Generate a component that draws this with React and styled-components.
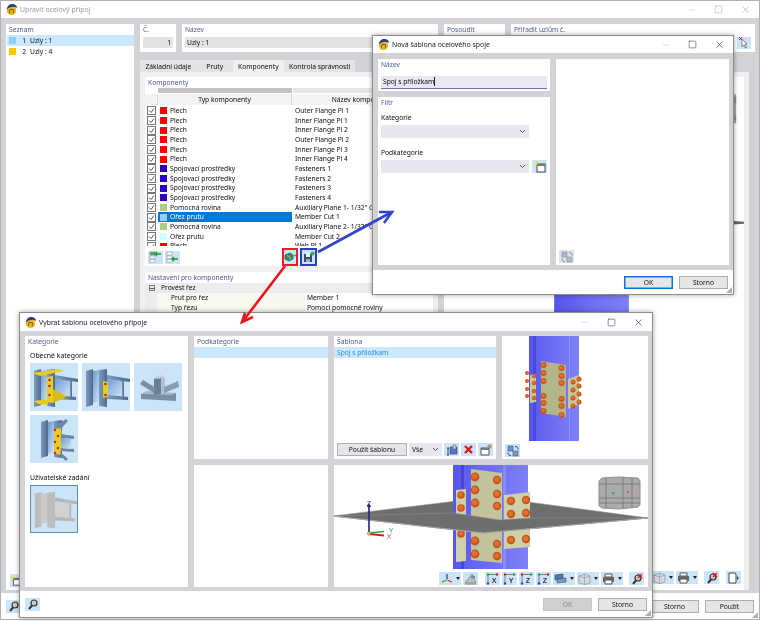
import React from 'react';
import styled, { createGlobalStyle } from 'styled-components';
import { Minus, Square, X } from 'lucide-react';

const Global = createGlobalStyle`
  html, body { margin: 0; padding: 0; background: #fff; }
  * { box-sizing: border-box; }
  body { font-family: "Noto Sans", "Open Sans", sans-serif; font-size: 6.7px; color: #0c0c0c; }
`;

const Desk = styled.div`
  position: relative;
  width: 760px;
  height: 621px;
  overflow: hidden;
  filter: blur(0.3px);
`;

const Win = styled.div`
  position: absolute;
  left: ${(p) => p.$left}px;
  top: ${(p) => p.$top}px;
  width: ${(p) => p.$w}px;
  height: ${(p) => p.$h}px;
  display: flex;
  flex-direction: column;
  background: #fff;
  border: 1px solid ${(p) => (p.$back ? '#b0b0b0' : '#8c8c8c')};
  box-shadow: ${(p) => (p.$back ? 'none' : '0 0 5px rgba(0,0,0,.35)')};
`;

const TitleBar = styled.div`
  height: ${(p) => p.$h || 17}px;
  flex: none;
  display: flex;
  align-items: center;
  gap: 2px;
  padding-left: 4px;
  font-size: 6.9px;
  color: ${(p) => (p.$dim ? '#9b9b9b' : '#222')};
`;

const WinControls = styled.div`
  margin-left: auto;
  display: flex;
  align-items: center;
  color: ${(p) => (p.$dim ? '#a8a8a8' : '#333')};
  svg { display: block; margin-right: 17px; stroke-width: 1.4; }
  svg:first-child { color: #c8c8c8; }
  svg:last-child { margin-right: 8px; }
`;

const WinBody = styled.div`
  flex: 1;
  min-height: 0;
  background: #d2d2d7;
`;

const Footer = styled.div`
  flex: none;
  height: ${(p) => p.$h || 26}px;
  display: flex;
  align-items: center;
  justify-content: flex-end;
  gap: 6px;
  padding: 0 5px;
  position: relative;
`;

const Btn = styled.div`
  width: ${(p) => p.$w || 49}px;
  height: 13px;
  display: flex;
  align-items: center;
  justify-content: center;
  background: ${(p) => (p.$off ? '#cfcfcf' : '#e6e6e6')};
  color: ${(p) => (p.$off ? '#8a8a8a' : '#111')};
  border: 1px solid ${(p) => (p.$primary ? '#0a78d2' : p.$off ? '#c4c4c4' : '#adadad')};
  box-shadow: ${(p) => (p.$primary ? 'inset 0 0 0 0.5px #0a78d2' : 'none')};
`;

const Grip = styled.span`
  position: absolute;
  right: 1px;
  bottom: 1px;
  width: 6px;
  height: 6px;
  background: radial-gradient(circle, #a8a8a8 0.7px, transparent 0.8px) 0 0 / 2px 2px;
  clip-path: polygon(100% 0, 100% 100%, 0 100%);
`;

const Panel = styled.div`
  background: #fff;
  min-width: 0;
  min-height: 0;
  overflow: hidden;
  position: relative;
`;

const PanelTitle = styled.div`
  color: #4c5b8c;
  line-height: 11px;
  height: 11px;
  padding-left: ${(p) => (p.$flush ? 0 : 3)}px;
`;

const IconBtn = styled.div`
  flex: none;
  width: ${(p) => p.$w || 15}px;
  height: ${(p) => p.$h || 13}px;
  display: flex;
  align-items: center;
  justify-content: center;
  gap: 3px;
  background: ${(p) => (p.$off ? '#e2e2e2' : '#cce4f7')};
  border: ${(p) => (p.$ring ? `2.5px solid ${p.$ring}` : 'none')};
`;

const Caret = styled.span`
  width: 0;
  height: 0;
  border-left: 2.5px solid transparent;
  border-right: 2.5px solid transparent;
  border-top: 3px solid #222;
`;

/* main window */
const MainBody = styled(WinBody)`
  display: grid;
  grid-template-columns: 128px 1fr;
  gap: 6px;
  padding: 6px 4px 3px 5px;
`;

const ListPanel = styled(Panel)`
  display: flex;
  flex-direction: column;
`;

const ListItem = styled.div`
  height: 11px;
  margin-left: 1px;
  padding-left: 2px;
  display: flex;
  align-items: center;
  background: ${(p) => (p.$active ? '#cce8ff' : 'transparent')};
`;

const Swatch = styled.i`
  display: block;
  flex: none;
  width: ${(p) => p.$s || 7}px;
  height: ${(p) => p.$s || 7}px;
  background: ${(p) => p.$c};
`;

const ListNo = styled.span`
  width: 10px;
  text-align: right;
  margin-right: 4px;
`;

const ListFoot = styled.div`
  margin-top: auto;
  padding: 0 0 3px 4px;
`;

const MainRight = styled.div`
  display: flex;
  flex-direction: column;
  min-width: 0;
`;

const FieldsRow = styled.div`
  display: grid;
  grid-template-columns: 36px 256px 61px 244px;
  gap: 6px;
  height: 28px;
`;

const FieldPanel = styled(Panel)`
  padding: 0 3px;
`;

const ReadOnly = styled.div`
  height: 11px;
  margin-top: 2px;
  background: #e3e3e3;
  line-height: 11px;
  padding: 0 2px;
  text-align: ${(p) => p.$align || 'left'};
`;

const MainLower = styled.div`
  flex: 1;
  min-height: 0;
  display: grid;
  grid-template-columns: 298px 305px;
  gap: 6px;
  margin-top: 8px;
`;

const Tabs = styled.div`
  display: flex;
  height: 12px;
`;

const Tab = styled.div`
  padding: 0 ${(p) => p.$pad}px;
  line-height: 13px;
  background: ${(p) => (p.$active ? '#f0f0f0' : '#e4e4e6')};
`;

const TabBody = styled.div`
  height: calc(100% - 12px);
  background: #f0f0f0;
  padding: 5px 5px 0;
  display: flex;
  flex-direction: column;
  gap: 6px;
`;

const CompPanel = styled(Panel)`
  flex: none;
  height: 189px;
  display: flex;
  flex-direction: column;
`;

const TableGroup = styled.div`
  height: 5px;
  margin: 0 0 1px 13px;
  display: grid;
  grid-template-columns: 134px 1fr;
  gap: 1px;
  flex: none;
  div { background: #c2c2c2; }
  div + div { background: #e4e4e4; }
`;

const TableRowHead = styled.div`
  flex: none;
  height: 11px;
  display: grid;
  grid-template-columns: 13px 134px 1fr;
  line-height: 11px;
  background: #f3f3f3;
  span { text-align: center; border-right: 1px solid #d8d8d8; }
`;

const Rows = styled.div`
  height: 140px;
  margin-top: 1px;
  overflow: hidden;
  flex: none;
`;

const Row = styled.div`
  height: 9.67px;
  display: grid;
  grid-template-columns: 13px 134px 1fr;
  line-height: 9.6px;
`;

const CheckCell = styled.div`
  display: flex;
  align-items: center;
  justify-content: center;
`;

const TypeCell = styled.div`
  display: flex;
  align-items: center;
  gap: 3px;
  padding-left: 2px;
  background: ${(p) => (p.$sel ? '#0078d4' : 'transparent')};
  color: ${(p) => (p.$sel ? '#fff' : 'inherit')};
`;

const NameCell = styled.div`
  padding-left: 3px;
  white-space: nowrap;
`;

const CompTools = styled.div`
  flex: none;
  display: flex;
  align-items: center;
  padding: 2px 0 0 3px;
  gap: 2px;
`;

const ToolSpacer = styled.span`
  flex: none;
  width: ${(p) => p.$w}px;
`;

const SetPanel = styled(Panel)`
  flex: 1;
`;

const TreeHead = styled.div`
  height: 10px;
  line-height: 10px;
  display: flex;
  align-items: center;
  gap: 6px;
  padding-left: 4px;
  background: #ececec;
`;

const PlusBox = styled.span`
  width: 6px;
  height: 6px;
  border: 1px solid #777;
  position: relative;
  &::after {
    content: '';
    position: absolute;
    left: 0;
    right: 0;
    top: 1.5px;
    height: 1px;
    background: #555;
  }
`;

const TreeRow = styled.div`
  height: 10px;
  line-height: 10px;
  display: grid;
  grid-template-columns: 12px 121px 27px 1fr;
  div:nth-child(1) { background: #ececec; }
  div:nth-child(2) { background: #f8f8ef; padding-left: 14px; }
  div:nth-child(3) { background: #f6f6ee; }
  div:nth-child(4) { padding-left: 2px; white-space: nowrap; }
`;

const GraphPanel = styled(Panel)`
  margin: 12px 5px 0 0;
  display: flex;
  flex-direction: column;
  border-top: 5px solid #f0f0f0;
  overflow: visible;
  box-shadow: 5px 0 0 #efefef;
`;

const GraphCanvas = styled.svg`
  display: block;
  width: 100%;
  flex: none;
`;

const ViewTools = styled.div`
  flex: none;
  display: flex;
  justify-content: flex-end;
  align-items: center;
  gap: 2px;
  padding-right: ${(p) => p.$pr || 0}px;
  margin-top: ${(p) => p.$mt || 0}px;
`;

/* new template dialog */
const NewBody = styled(WinBody)`
  display: grid;
  grid-template-columns: 172px 173px;
  gap: 6px;
  padding: 6px 5px 5px;
`;

const NewLeft = styled.div`
  display: grid;
  grid-template-rows: 32px 1fr;
  gap: 6px;
  min-height: 0;
`;

const NameInput = styled.div`
  margin: 6px 3px 0;
  height: 13px;
  line-height: 12px;
  background: #e8e8f3;
  border-bottom: 1px solid #6f73b8;
  padding-left: 2px;
  span { border-right: 1px solid #222; }
`;

const FieldLabel = styled.div`
  padding: 4px 0 2px 3px;
  line-height: 11px;
  margin-top: ${(p) => p.$mt || 0}px;
`;

const SelectRow = styled.div`
  display: flex;
  gap: 3px;
  padding-left: 3px;
`;

const Select = styled.div`
  flex: none;
  width: ${(p) => p.$w || 148}px;
  height: 13px;
  background: #e6e7f1;
  display: flex;
  align-items: center;
  justify-content: ${(p) => (p.$text ? 'space-between' : 'flex-end')};
  padding: 0 3px;
  svg { display: block; }
`;

const CornerTool = styled.div`
  position: absolute;
  left: 3px;
  bottom: 2px;
`;

/* template picker dialog */
const PickBody = styled(WinBody)`
  display: grid;
  grid-template-columns: 163px 134px 162px 146px;
  grid-template-rows: 123px 122px;
  gap: 6px;
  padding: 5px 5px 4px;
`;

const CatPanel = styled(Panel)`
  grid-row: 1 / span 2;
`;

const ViewPanel = styled(Panel)`
  grid-column: 3 / span 2;
  display: flex;
  flex-direction: column;
`;

const SubHead = styled.div`
  font-size: 6.9px;
  padding: 3px 0 2px 5px;
  line-height: 11px;
  margin-top: ${(p) => p.$mt || 0}px;
`;

const Thumbs = styled.div`
  display: grid;
  grid-template-columns: repeat(3, 48px);
  gap: 4px;
  padding-left: 5px;
`;

const Thumb = styled.div`
  width: 48px;
  height: 48px;
  background: #cce4f7;
  border: ${(p) => (p.$sel ? '1px solid #5a8fc0' : 'none')};
  svg { display: block; width: 100%; height: 100%; }
`;

const SelectedLine = styled.div`
  height: 11px;
  background: #cce8ff;
  line-height: 11px;
  padding-left: 3px;
  color: #2a8fe0;
`;

const TemplatePanel = styled(Panel)`
  display: flex;
  flex-direction: column;
`;

const TemplateTools = styled.div`
  margin-top: auto;
  display: flex;
  align-items: center;
  gap: 2px;
  padding: 0 3px 3px;
`;

const PreviewPanel = styled(Panel)`
  display: flex;
  flex-direction: column;
`;

const PreviewTool = styled.div`
  padding: 3px 0 0 3px;
`;

/* drawings */
const Logo = () => (
  <svg width="13" height="13" viewBox="0 0 14 14">
    <circle cx="7" cy="8" r="5" fill="#e8b820" />
    <path d="M2 7c0-4 3-6 6-6 3 0 5 2 5 4L9 4C6 4 4 5 2 7z" fill="#24407a" />
    <path d="M5 11V7h4v4" fill="none" stroke="#7a5a10" />
  </svg>
);

const Check = () => (
  <svg width="9" height="9" viewBox="0 0 9 9">
    <rect x=".5" y=".5" width="8" height="8" fill="#fff" stroke="#777" />
    <path d="M2 4.5l2 2 3-4" fill="none" stroke="#444" strokeWidth=".9" />
  </svg>
);

const Chevron = () => (
  <svg width="7" height="5" viewBox="0 0 7 5">
    <path d="M1 1l2.5 2.5L6 1" fill="none" stroke="#555" />
  </svg>
);

const Magnifier = ({ cross }) => (
  <svg width="12" height="12" viewBox="0 0 12 12">
    <circle cx="7" cy="5" r="3" fill="#c8c8c8" stroke="#333" strokeWidth="1.2" />
    <path d="M5 7.5L2 11" stroke="#333" strokeWidth="2" />
    {cross && <path d="M7 1l4 4M11 1L7 5" stroke="#e01010" strokeWidth="1.4" />}
  </svg>
);

const NewFolder = () => (
  <svg width="13" height="13" viewBox="0 0 13 13">
    <rect x="4" y="4" width="8" height="8" fill="#fff" stroke="#444" />
    <path d="M4 4h8v2H4z" fill="#777" />
    <path d="M3.5 0l.8 2.2L6.5 3l-2.2.8-.8 2.2-.8-2.2L.5 3l2.2-.8z" fill="#f2dc20" />
  </svg>
);

const ArrowsList = ({ flip }) => (
  <svg width="13" height="12" viewBox="0 0 13 12">
    <rect x="1" y="1" width="5" height="3" fill={flip ? '#fff' : '#5aa85a'} stroke="#888" strokeWidth=".5" />
    <rect x="1" y="5" width="5" height="2.5" fill="#fff" stroke="#888" strokeWidth=".5" />
    <rect x="1" y="8.5" width="5" height="2.5" fill="#fff" stroke="#888" strokeWidth=".5" />
    <path d={flip ? 'M12 8H6M8 6L6 8l2 2' : 'M12 3H6M8 1L6 3l2 2'} stroke="#1a9a3a" fill="none" strokeWidth="1.3" />
  </svg>
);

const ApplyIcon = () => (
  <svg width="12" height="10" viewBox="0 0 12 10">
    <path d="M1 3l5-2 3 2v4L5 9 1 7z" fill="#3a8a5a" stroke="#245" strokeWidth=".6" />
    <path d="M3 3.5l3 1.5v3" fill="none" stroke="#cde" strokeWidth=".6" />
    <path d="M10 3.5h2" stroke="#2a6" strokeWidth="1.3" />
  </svg>
);

const SaveIcon = () => (
  <svg width="12" height="12" viewBox="0 0 12 12">
    <path d="M1 3h8v8H1z" fill="#3a4a70" />
    <path d="M3 3h4v3H3z" fill="#dfe" />
    <path d="M3 8h4v3H3z" fill="#aab" />
    <circle cx="9.5" cy="2.5" r="2" fill="#3aa84a" />
  </svg>
);

const SwapIcon = ({ off }) => (
  <svg width="12" height="12" viewBox="0 0 12 12" opacity={off ? 0.55 : 1}>
    <rect x="1" y="1" width="5" height="5" fill="#6f8fe0" stroke="#345" strokeWidth=".5" />
    <rect x="6" y="6" width="5" height="5" fill="#8a9ab0" stroke="#345" strokeWidth=".5" />
    <path d="M8 1.5c2 0 3 1 3 3M4 10.5c-2 0-3-1-3-3" fill="none" stroke="#2a3a60" />
  </svg>
);

const AxesIcon = () => (
  <svg width="12" height="11" viewBox="0 0 12 11">
    <path d="M6 7V1" stroke="#2a2ab0" strokeWidth="1.2" />
    <path d="M6 7l5 2" stroke="#d02020" strokeWidth="1.2" />
    <path d="M6 7L1 9" stroke="#20a040" strokeWidth="1.2" />
    <circle cx="6" cy="7" r="1" fill="#e8d020" />
  </svg>
);

const ViewSetIcon = () => (
  <svg width="13" height="12" viewBox="0 0 13 12">
    <path d="M1 10h11L8 1z" fill="#b8c8b0" stroke="#667" strokeWidth=".6" />
    <ellipse cx="9" cy="4" rx="2.5" ry="1.5" fill="#8a7ab0" />
    <path d="M1 11h11" stroke="#888" />
  </svg>
);

const AxisViewIcon = ({ label, a, b, c }) => (
  <svg width="14" height="12" viewBox="0 0 14 12">
    <path d="M2 1.5h9" stroke="#666" strokeWidth=".8" />
    <circle cx="2" cy="1.5" r="1.2" fill={a} />
    <circle cx="11" cy="1.5" r="1.2" fill={b} />
    <path d="M2 2v8" stroke="#666" strokeWidth=".8" />
    <circle cx="2" cy="10.5" r="1.2" fill={c} />
    <text x="8" y="10" textAnchor="middle" fontSize="7" fontWeight="700" fill="#333" fontFamily="Liberation Sans">{label}</text>
  </svg>
);

const PlatesIcon = () => (
  <svg width="13" height="11" viewBox="0 0 13 11">
    <path d="M1 2l8-1v4l-8 2z" fill="#4a78b8" stroke="#334" strokeWidth=".5" />
    <path d="M3 6l9-1v4l-9 1z" fill="#7a9ac8" stroke="#334" strokeWidth=".5" />
  </svg>
);

const BoxIcon = () => (
  <svg width="13" height="12" viewBox="0 0 13 12">
    <path d="M1 3l6-2 5 2v7l-5 1.5L1 10z" fill="#d5dbe3" stroke="#8a93a0" strokeWidth=".7" />
    <path d="M6.5 1v10.5M1 3l5.5 2L12 3" fill="none" stroke="#8a93a0" strokeWidth=".6" />
  </svg>
);

const PrintIcon = () => (
  <svg width="13" height="12" viewBox="0 0 13 12">
    <path d="M3 1h7v3H3z" fill="#fff" stroke="#555" />
    <path d="M1 4h11v5H1z" fill="#666" />
    <path d="M3 7h7v4H3z" fill="#fff" stroke="#555" />
  </svg>
);

const PageIcon = () => (
  <svg width="13" height="12" viewBox="0 0 13 12">
    <path d="M2 1h6l1 1v9H2z" fill="#fff" stroke="#444" />
    <path d="M10 4l2 2-2 2z" fill="#444" />
  </svg>
);

const TemplateIcon = () => (
  <svg width="12" height="12" viewBox="0 0 12 12">
    <path d="M4 3h7v7H4z" fill="#5a78d8" stroke="#234" strokeWidth=".5" />
    <path d="M7 1h3v4H7z" fill="#ccc" stroke="#555" strokeWidth=".5" />
    <path d="M1 4h2M2 4v7M1 11h2" stroke="#223" strokeWidth=".8" />
  </svg>
);

const RedX = () => (
  <svg width="11" height="11" viewBox="0 0 11 11">
    <path d="M2 2l7 7M9 2l-7 7" stroke="#e01414" strokeWidth="2.4" />
  </svg>
);

const ExportIcon = () => (
  <svg width="12" height="12" viewBox="0 0 12 12">
    <path d="M1 4h8v7H1z" fill="#fff" stroke="#555" />
    <path d="M1 4h8v2H1z" fill="#777" />
    <path d="M8 1h3v3H8z" fill="#caa86a" stroke="#765" strokeWidth=".5" />
  </svg>
);

const PickCursor = () => (
  <svg width="13" height="12" viewBox="0 0 13 12">
    <path d="M4 2l5 5-2 .3L8.5 10.5l-1 .5L6 8 4 9.5z" fill="#fff" stroke="#555" strokeWidth=".7" />
    <path d="M1 0l3 3M4 0L1 3" stroke="#d01818" strokeWidth=".9" />
  </svg>
);

const Bolt = ({ x, y, r = 3 }) => (
  <g>
    <circle cx={x} cy={y} r={r} fill="#c4561a" />
    <circle cx={x - 0.3} cy={y - 0.4} r={r * 0.62} fill="#e07030" />
  </g>
);

const beamStops = (
  <defs>
    <linearGradient id="steel" x1="0" x2="1" y1="0" y2="0">
      <stop offset="0" stopColor="#7f9bbc" />
      <stop offset="1" stopColor="#4e6a8e" />
    </linearGradient>
    <linearGradient id="web" x1="0" x2="1" y1="0" y2="1">
      <stop offset="0" stopColor="#6c9ad0" />
      <stop offset="1" stopColor="#d4e8f8" />
    </linearGradient>
    <linearGradient id="col" x1="0" x2="1" y1="0" y2="0">
      <stop offset="0" stopColor="#5656f0" />
      <stop offset=".5" stopColor="#6e6ef2" />
      <stop offset="1" stopColor="#8080fa" />
    </linearGradient>
  </defs>
);

const Column = ({ fill = 'url(#steel)', web = 'url(#web)' }) => (
  <g>
    <path d="M4 8l7-2v36l-7 2z" fill={fill} />
    <path d="M11 8l7-1v31l-7 2z" fill={web} />
    <path d="M17 7l8-1v38l-8-1z" fill={fill} />
  </g>
);

const Beam = ({ fill = 'url(#steel)', web = 'url(#web)' }) => (
  <g>
    <path d="M25 16l16 2v16l-16-1z" fill={web} />
    <path d="M25 12l23 4v3l-23-3z" fill={fill} />
    <path d="M25 32l21 2v3l-21-1z" fill={fill} />
    <path d="M40 18l2 0v16l-2 0z" fill={fill} />
  </g>
);

const ThumbA = () => (
  <svg viewBox="0 0 48 48">
    <Column />
    <path d="M2 10l26-4 6 2-24 5z" fill="#e8cc20" />
    <Beam />
    <path d="M17 14l6-1v27l-6-1z" fill="#e8cc20" />
    <path d="M23 26l14 8-14 6z" fill="#d8bc14" />
    <path d="M4 38l14-2v6L8 41z" fill="#e8cc20" />
    <circle cx="19.5" cy="17" r="1.3" fill="#c02040" />
    <circle cx="19.5" cy="23" r="1.3" fill="#c02040" />
    <circle cx="19.5" cy="32" r="1.3" fill="#c02040" />
  </svg>
);

const ThumbB = () => (
  <svg viewBox="0 0 48 48">
    <Column />
    <Beam />
    <path d="M21 18l5 1v15l-5 1z" fill="#e8cc20" />
    <circle cx="23.5" cy="21" r="1.3" fill="#c02040" />
    <circle cx="23.5" cy="32" r="1.3" fill="#c02040" />
  </svg>
);

const ThumbC = () => (
  <svg viewBox="0 0 48 48">
    <path d="M7 31l35-1v8l-35-2z" fill="#7b8ea6" />
    <path d="M7 31l6-3 29 2-5 2z" fill="#a8b6c6" />
    <path d="M20 16l7-2v17l-7 1z" fill="#6a7f98" />
    <path d="M27 14l4 1v14l-4 2z" fill="#b2c0d0" />
    <path d="M20 14l7-2 4 2-7 2z" fill="#c4d0dc" />
    <path d="M6 21l3-4 13 8-2 5z" fill="#7b8ea6" />
    <path d="M30 24l14-6 1 6-15 6z" fill="#8a9cb2" />
  </svg>
);

const ThumbD = () => (
  <svg viewBox="0 0 48 48">
    <g transform="translate(7 -1)">
      <Column />
    </g>
    <path d="M27 10l9-6 2 2-8 9z" fill="#6a86a8" />
    <path d="M29 36l9 8-2 2-9-8z" fill="#6a86a8" />
    <path d="M24 14l7-1 2 14-3 13-6-2z" fill="#e8cc20" />
    <path d="M31 19l13 2v3l-13-1zM31 33l13 1v3l-13-1z" fill="#6a86a8" />
    <path d="M31 23l10 1v10l-10-1z" fill="url(#web)" />
    {[15, 21, 27, 33, 38].map((y, i) => (
      <circle key={y} cx={i % 2 ? 28 : 25} cy={y} r="1.2" fill="#c02040" />
    ))}
  </svg>
);

const ThumbE = () => (
  <svg viewBox="0 0 48 48">
    <Column fill="#bdbdbd" web="#cbcbcb" />
    <Beam fill="#b8b8b8" web="#d2d2d2" />
  </svg>
);

const MainBackGraph = () => (
  <GraphCanvas viewBox="444 77 305 492" height="492">
    <path d="M735 90h6v30h-6z" fill="#a9a9a9" />
    <path d="M735 93h6v6h-6zM735 112h6v5h-6z" fill="#8d8d8d" />
    <path d="M735 219l14 1v2l-14 1z" fill="#666" />
    <path d="M556 223h76v92h-76z" fill="url(#col)" />
  </GraphCanvas>
);

const PreviewGraph = () => (
  <GraphCanvas viewBox="502 336 146 105" height="105">
    <rect x="529" y="336" width="50" height="105" fill="url(#col)" />
    <rect x="533" y="336" width="3" height="105" fill="#3d3dc8" opacity=".6" />
    <rect x="569" y="336" width="1" height="105" fill="#8f8ff8" />
    <path d="M530 375l6-1v28l-6 1z" fill="#c6c69a" />
    {[373, 381, 389, 396].map((y) => (
      <Bolt key={y} x={527} y={y} r={2} />
    ))}
    {[376, 383, 391, 398].map((y) => (
      <Bolt key={y} x={534} y={y} r={2.2} />
    ))}
    <path d="M541 361l25 4v52l-25-4z" fill="#b5b58a" />
    {[365, 373, 381, 396, 403, 411].map((y) => (
      <Bolt key={y} x={543.5} y={y} />
    ))}
    {[368, 376, 383, 399, 406, 415].map((y) => (
      <Bolt key={y} x={561.5} y={y} />
    ))}
    <path d="M568 379l11-4v29l-11 5z" fill="#c6c69a" />
    {[382, 390, 398, 406].map((y) => (
      <Bolt key={y} x={573} y={y} r={2.5} />
    ))}
    {[379, 386, 394, 402].map((y) => (
      <Bolt key={y} x={579} y={y} r={2.5} />
    ))}
  </GraphCanvas>
);

const Connection = () => (
  <g>
    <rect x="453" y="464" width="75" height="105" fill="url(#col)" />
    <rect x="461" y="464" width="3" height="105" fill="#4646d0" />
    <rect x="503" y="464" width="3" height="105" fill="#8c8cf6" />
    <path d="M456 490l10-1v72l-10 1z" fill="#cfcfa8" />
    <path d="M471 469l31 4v90l-31-3z" fill="#c2c29c" />
    {[477, 490, 503, 541, 554].map((y) => (
      <Bolt key={y} x={475} y={y} r={4.4} />
    ))}
    {[480, 494, 506, 544, 556].map((y) => (
      <Bolt key={y} x={497} y={y} r={4.2} />
    ))}
    {[495, 508, 534].map((y) => (
      <Bolt key={y} x={461} y={y} r={3.8} />
    ))}
    <path d="M504 495l26-3v55l-26 2z" fill="#cfcfa8" />
    {[501, 514, 540].map((y) => (
      <Bolt key={y} x={511} y={y} r={4.2} />
    ))}
    {[500, 513, 539].map((y) => (
      <Bolt key={y} x={526} y={y} r={4.2} />
    ))}
  </g>
);

const BigView = () => (
  <GraphCanvas viewBox="334 465 314 105" height="105">
    <path d="M333 516L490 497l158 21-165 15z" fill="#6e6e6e" stroke="#8d8d8d" strokeWidth=".6" />
    <Connection />
    <path d="M333 516l120-3 47 7 30-2 118 0-165 15z" fill="#6e6e6e" stroke="#8d8d8d" strokeWidth=".6" />
    <path d="M333 516l150 17 165-15" fill="none" stroke="#a5a5a5" strokeWidth="1" />
    <path d="M599 481l3-3 17-1 19 1 2 3v24l-2 2-19 2-17-1-3-2z" fill="#ababab" stroke="#8f8f8f" />
    <path d="M606 478v30M623 477v31M632 478v29M599 484h41M599 498h41M599 503h41" stroke="#777" strokeWidth=".9" fill="none" />
    <path d="M611 492l4 0-1 4z" fill="#5aa86a" />
    <circle cx="628" cy="492" r="1.2" fill="#d05a6a" />
    <path d="M369 533v-27" stroke="#20208e" strokeWidth="1.6" />
    <path d="M369 503l-2 4h4z" fill="#20208e" />
    <path d="M369 533l15-1.5" stroke="#20b040" strokeWidth="1.6" />
    <path d="M369 534l15 1.5" stroke="#d02020" strokeWidth="1.8" />
    <circle cx="369" cy="533.5" r="1.8" fill="#e6d020" stroke="#555" strokeWidth=".4" />
    <text x="369" y="506" textAnchor="middle" fontSize="7" fill="#2a2a90" fontFamily="Liberation Sans">Z</text>
    <text x="391" y="533" textAnchor="middle" fontSize="7" fill="#30b050" fontFamily="Liberation Sans">Y</text>
    <text x="389" y="539" textAnchor="middle" fontSize="7" fill="#e05050" fontFamily="Liberation Sans">X</text>
  </GraphCanvas>
);

const Arrows = styled.svg`
  position: absolute;
  left: 0;
  top: 0;
  pointer-events: none;
`;

const components = [
  ['#ff0000', 'Plech', 'Outer Flange Pl 1'],
  ['#ff0000', 'Plech', 'Inner Flange Pl 1'],
  ['#ff0000', 'Plech', 'Inner Flange Pl 2'],
  ['#ff0000', 'Plech', 'Outer Flange Pl 2'],
  ['#ff0000', 'Plech', 'Inner Flange Pl 3'],
  ['#ff0000', 'Plech', 'Inner Flange Pl 4'],
  ['#2a00c8', 'Spojovací prostředky', 'Fasteners 1'],
  ['#2a00c8', 'Spojovací prostředky', 'Fasteners 2'],
  ['#2a00c8', 'Spojovací prostředky', 'Fasteners 3'],
  ['#2a00c8', 'Spojovací prostředky', 'Fasteners 4'],
  ['#a8d080', 'Pomocná rovina', 'Auxiliary Plane 1- 1/32" G'],
  ['#8fd0f5', 'Ořez prutu', 'Member Cut 1', true],
  ['#a8d080', 'Pomocná rovina', 'Auxiliary Plane 2- 1/32" G'],
  ['#ccffff', 'Ořez prutu', 'Member Cut 2'],
  ['#ff0000', 'Plech', 'Web Pl 1'],
];

const WindowControls = ({ dim }) => (
  <WinControls $dim={dim}>
    <Minus size={10} />
    <Square size={9} />
    <X size={11} />
  </WinControls>
);

const ViewToolbar = () => (
  <>
    <IconBtn $w={22}><AxesIcon /><Caret /></IconBtn>
    <IconBtn><ViewSetIcon /></IconBtn>
    <ToolSpacer $w={3} />
    <IconBtn><AxisViewIcon label="X" a="#20a040" b="#d02020" c="#2050d0" /></IconBtn>
    <IconBtn><AxisViewIcon label="Y" a="#d02020" b="#20a040" c="#2050d0" /></IconBtn>
    <IconBtn><AxisViewIcon label="Z" a="#d02020" b="#20a040" c="#2050d0" /></IconBtn>
    <IconBtn><AxisViewIcon label="Z" a="#20a040" b="#d02020" c="#2030b0" /></IconBtn>
    <IconBtn $w={22}><PlatesIcon /><Caret /></IconBtn>
    <IconBtn $w={22}><BoxIcon /><Caret /></IconBtn>
    <IconBtn $w={22}><PrintIcon /><Caret /></IconBtn>
    <ToolSpacer $w={2} />
    <IconBtn><Magnifier cross /></IconBtn>
  </>
);

export default function App() {
  return (
    <Desk>
      <Global />
      <svg width="0" height="0" style={{ position: 'absolute' }}>{beamStops}</svg>

      <Win $left={0} $top={0} $w={760} $h={620} $back>
        <TitleBar $dim>
          <Logo />
          Upravit ocelový přípoj
          <WindowControls dim />
        </TitleBar>
        <MainBody>
          <ListPanel>
            <PanelTitle>Seznam</PanelTitle>
            <ListItem $active>
              <Swatch $c="#89d4f5" />
              <ListNo>1</ListNo> Uzly : 1
            </ListItem>
            <ListItem>
              <Swatch $c="#ffc800" />
              <ListNo>2</ListNo> Uzly : 4
            </ListItem>
            <ListFoot>
              <IconBtn $w={11}><NewFolder /></IconBtn>
            </ListFoot>
          </ListPanel>

          <MainRight>
            <FieldsRow>
              <FieldPanel>
                <PanelTitle $flush>Č.</PanelTitle>
                <ReadOnly $align="right">1</ReadOnly>
              </FieldPanel>
              <FieldPanel>
                <PanelTitle $flush>Název</PanelTitle>
                <ReadOnly>Uzly : 1</ReadOnly>
              </FieldPanel>
              <FieldPanel>
                <PanelTitle $flush>Posoudit</PanelTitle>
              </FieldPanel>
              <FieldPanel>
                <PanelTitle $flush>Přiřadit uzlům č.</PanelTitle>
                <ViewTools $mt={2} $pr={1}>
                  <IconBtn $w={14} $h={12}><PickCursor /></IconBtn>
                </ViewTools>
              </FieldPanel>
            </FieldsRow>

            <MainLower>
              <div>
                <Tabs>
                  <Tab $pad={5.5}>Základní údaje</Tab>
                  <Tab $pad={9.5}>Pruty</Tab>
                  <Tab $pad={5.5} $active>Komponenty</Tab>
                  <Tab $pad={5}>Kontrola správnosti</Tab>
                </Tabs>
                <TabBody>
                  <CompPanel>
                    <PanelTitle>Komponenty</PanelTitle>
                    <TableGroup><div /><div /></TableGroup>
                    <TableRowHead>
                      <span />
                      <span>Typ komponenty</span>
                      <span>Název komponenty</span>
                    </TableRowHead>
                    <Rows>
                      {components.map(([color, type, name, sel]) => (
                        <Row key={name}>
                          <CheckCell><Check /></CheckCell>
                          <TypeCell $sel={sel}>
                            <Swatch $c={color} />
                            {type}
                          </TypeCell>
                          <NameCell>{name}</NameCell>
                        </Row>
                      ))}
                    </Rows>
                    <CompTools>
                      <IconBtn><ArrowsList /></IconBtn>
                      <IconBtn><ArrowsList flip /></IconBtn>
                      <ToolSpacer $w={98} />
                      <IconBtn $w={16} $h={18} $ring="#ee1c25"><ApplyIcon /></IconBtn>
                      <IconBtn $w={17} $h={18} $ring="#2b3fc4"><SaveIcon /></IconBtn>
                    </CompTools>
                  </CompPanel>
                  <SetPanel>
                    <PanelTitle>Nastavení pro komponenty</PanelTitle>
                    <TreeHead><PlusBox /> Provést řez</TreeHead>
                    <TreeRow><div /><div>Prut pro řez</div><div /><div>Member 1</div></TreeRow>
                    <TreeRow><div /><div>Typ řezu</div><div /><div>Pomocí pomocné roviny</div></TreeRow>
                  </SetPanel>
                </TabBody>
              </div>
              <GraphPanel>
                <MainBackGraph />
                <ViewTools $mt={2} $pr={3}>
                  <IconBtn $w={22}><BoxIcon /><Caret /></IconBtn>
                  <IconBtn $w={22}><PrintIcon /><Caret /></IconBtn>
                  <ToolSpacer $w={2} />
                  <IconBtn><Magnifier cross /></IconBtn>
                  <ToolSpacer $w={3} />
                  <IconBtn><PageIcon /></IconBtn>
                </ViewTools>
              </GraphPanel>
            </MainLower>
          </MainRight>
        </MainBody>
        <Footer>
          <IconBtn style={{ marginRight: 'auto' }}><Magnifier /></IconBtn>
          <Btn>Storno</Btn>
          <Btn>Použít</Btn>
          <Grip />
        </Footer>
      </Win>

      <Win $left={372} $top={35} $w={362} $h={260}>
        <TitleBar>
          <Logo />
          Nová šablona ocelového spoje
          <WindowControls />
        </TitleBar>
        <NewBody>
          <NewLeft>
            <Panel>
              <PanelTitle>Název</PanelTitle>
              <NameInput><span>Spoj s příložkam</span></NameInput>
            </Panel>
            <Panel>
              <PanelTitle>Filtr</PanelTitle>
              <FieldLabel>Kategorie</FieldLabel>
              <SelectRow><Select><Chevron /></Select></SelectRow>
              <FieldLabel $mt={4.5}>Podkategorie</FieldLabel>
              <SelectRow>
                <Select><Chevron /></Select>
                <IconBtn><NewFolder /></IconBtn>
              </SelectRow>
            </Panel>
          </NewLeft>
          <Panel>
            <CornerTool>
              <IconBtn $off><SwapIcon off /></IconBtn>
            </CornerTool>
          </Panel>
        </NewBody>
        <Footer $h={24}>
          <Btn $primary>OK</Btn>
          <Btn>Storno</Btn>
          <Grip />
        </Footer>
      </Win>

      <Win $left={19} $top={312} $w={634} $h={306}>
        <TitleBar $h={18}>
          <Logo />
          Vybrat šablonu ocelového přípoje
          <WindowControls />
        </TitleBar>
        <PickBody>
          <CatPanel>
            <PanelTitle>Kategorie</PanelTitle>
            <SubHead>Obecné kategorie</SubHead>
            <Thumbs>
              <Thumb><ThumbA /></Thumb>
              <Thumb><ThumbB /></Thumb>
              <Thumb><ThumbC /></Thumb>
              <Thumb><ThumbD /></Thumb>
            </Thumbs>
            <SubHead $mt={5.5}>Uživatelské zadání</SubHead>
            <Thumbs>
              <Thumb $sel><ThumbE /></Thumb>
            </Thumbs>
          </CatPanel>
          <Panel>
            <PanelTitle>Podkategorie</PanelTitle>
            <SelectedLine />
          </Panel>
          <TemplatePanel>
            <PanelTitle>Šablona</PanelTitle>
            <SelectedLine>Spoj s příložkam</SelectedLine>
            <TemplateTools>
              <Btn $w={71}>Použít šablonu</Btn>
              <Select $w={33} $text>Vše<Chevron /></Select>
              <IconBtn><TemplateIcon /></IconBtn>
              <IconBtn><RedX /></IconBtn>
              <IconBtn><ExportIcon /></IconBtn>
            </TemplateTools>
          </TemplatePanel>
          <PreviewPanel>
            <PreviewGraph />
            <PreviewTool>
              <IconBtn><SwapIcon /></IconBtn>
            </PreviewTool>
          </PreviewPanel>
          <Panel />
          <ViewPanel>
            <BigView />
            <ViewTools $mt={2} $pr={4}>
              <ViewToolbar />
            </ViewTools>
          </ViewPanel>
        </PickBody>
        <Footer>
          <IconBtn style={{ marginRight: 'auto' }}><Magnifier /></IconBtn>
          <Btn $off>OK</Btn>
          <Btn>Storno</Btn>
          <Grip />
        </Footer>
      </Win>

      <Arrows width="760" height="621" viewBox="0 0 760 621">
        <path d="M285 266L243 321" stroke="#e8141c" strokeWidth="2.6" fill="none" />
        <path d="M245 313L242 322 253 317" stroke="#e8141c" strokeWidth="2.6" fill="none" />
        <path d="M318 252L390 213" stroke="#3344cc" strokeWidth="2.6" fill="none" />
        <path d="M379 212L392 212 384 223" stroke="#3344cc" strokeWidth="2.6" fill="none" />
      </Arrows>
    </Desk>
  );
}
